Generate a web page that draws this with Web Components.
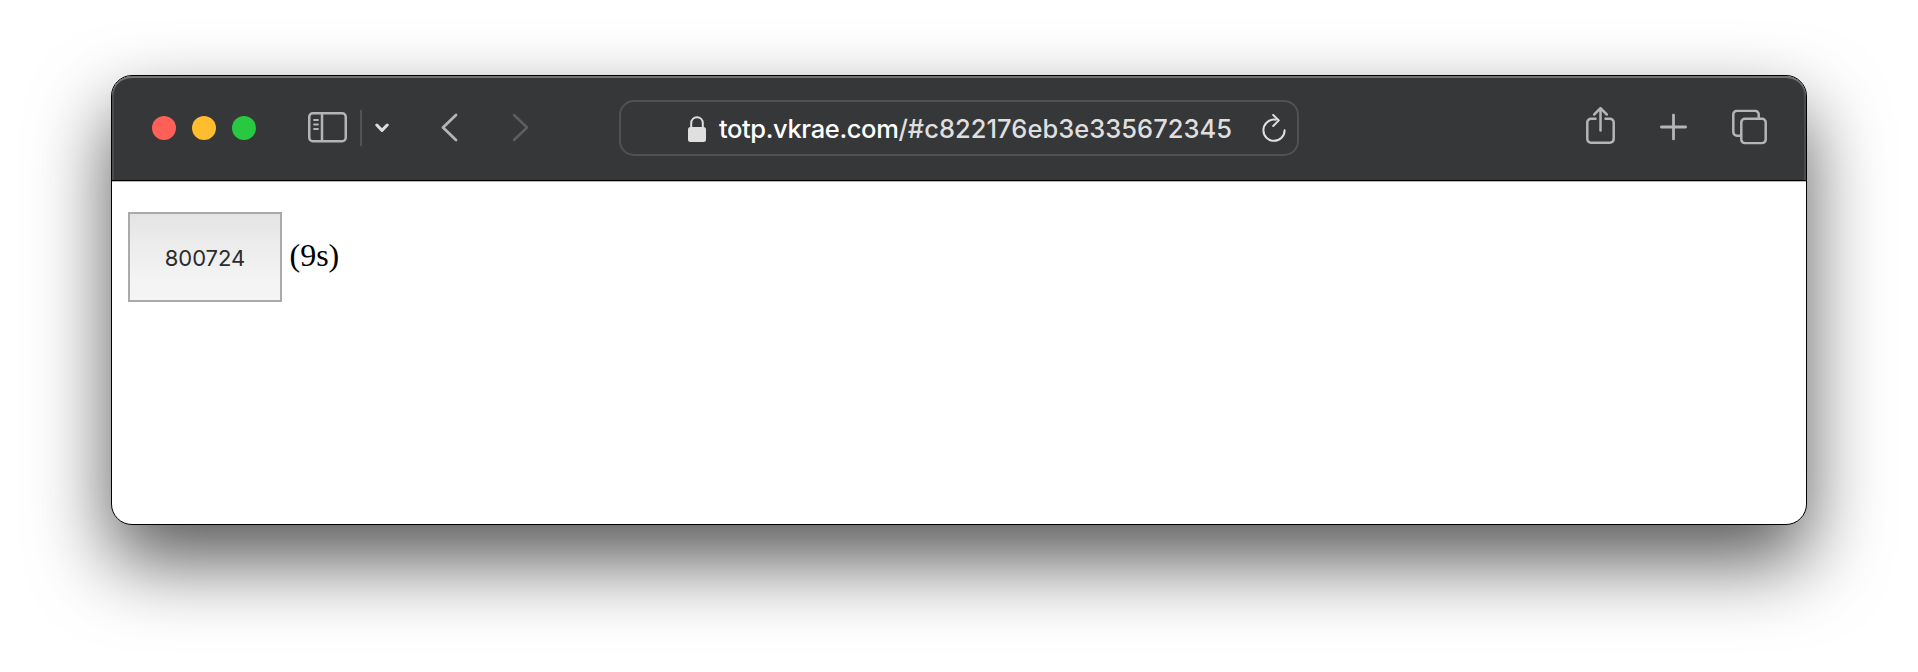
<!DOCTYPE html>
<html lang="en">
<head>
<meta charset="utf-8">
<title>totp.vkrae.com</title>
<style>
html,body{margin:0;background:#fff}
body{width:1918px;height:672px;overflow:hidden}
</style>
</head>
<body>
<browser-window>
  <browser-toolbar slot="toolbar">
    <traffic-lights slot="start"></traffic-lights>
    <tool-icon slot="start" name="sidebar" style="margin-left:52px"></tool-icon>
    <tool-icon slot="start" name="divider" style="margin-left:13px"></tool-icon>
    <tool-icon slot="start" name="down" style="margin-left:13px"></tool-icon>
    <tool-icon slot="start" name="back" style="margin-left:52px"></tool-icon>
    <tool-icon slot="start" name="forward" style="margin-left:54px"></tool-icon>
    <address-bar slot="address"><span slot="host">totp.vkrae.com</span><span slot="path">/#c822176eb3e335672345</span></address-bar>
    <tool-icon slot="end" name="share"></tool-icon>
    <tool-icon slot="end" name="plus"></tool-icon>
    <tool-icon slot="end" name="tabs"></tool-icon>
  </browser-toolbar>
  <totp-code><span slot="code">800724</span><span slot="time">(9s)</span></totp-code>
</browser-window>
<script>
const define = (name, html) => customElements.define(name, class extends HTMLElement {
  constructor() {
    super();
    this.attachShadow({ mode: 'open' }).innerHTML = html;
  }
});

define('browser-window', `<style>
:host{display:block;padding:75px 111px 147px;box-sizing:border-box;width:1918px;height:672px}
.frame{box-sizing:border-box;height:450px;border:1px solid #000;border-radius:21px;background:#fff;overflow:hidden;box-shadow:0 36px 78px rgba(0,0,0,.66)}
</style><div class="frame"><slot name="toolbar"></slot><slot></slot></div>`);

define('browser-toolbar', `<style>
:host{display:grid;grid-template-columns:507px 680px 507px;align-items:center;height:106px;padding-bottom:1px;box-sizing:border-box;background:#363739;border-bottom:1px solid #bbb;
box-shadow:inset 0 -1px #000,inset 0 2px #737475,inset 2px 0 #4b4c4e,inset -2px 0 #4b4c4e;border-radius:20px 20px 0 0}
.start{display:flex;align-items:center;padding-left:40px;height:104px}
.end{display:flex;align-items:center;justify-content:flex-end;gap:45px;padding-right:39px;height:104px}
</style><div class="start"><slot name="start"></slot></div><slot name="address"></slot><div class="end"><slot name="end"></slot></div>`);

define('traffic-lights', `<style>
:host{display:flex;gap:16px}
i{width:24px;height:24px;border-radius:50%;background:#fe5f57}
i:nth-of-type(2){background:#febc2e}i:nth-of-type(3){background:#28c840}
</style><i></i><i></i><i></i>`);

const ICONS = {
  sidebar: [39, 31, '<rect x="1.25" y="1.25" width="36.5" height="28" rx="3.5"/><path d="M14 1v29"/><path stroke-width="1.8" stroke-linecap="round" d="M6 8h4M6 12.5h4M6 17h4"/>'],
  divider: [2, 36, '<path stroke="#535456" stroke-width="2" d="M1 0v36"/>'],
  down: [14, 10, '<path stroke="#dededf" stroke-width="3" stroke-linecap="round" stroke-linejoin="round" d="M1.8 2 7 7.4 12.2 2"/>'],
  back: [17, 29, '<path stroke-linecap="round" stroke-linejoin="round" stroke-width="2.8" d="M15 2 2 14.5 15 27"/>'],
  forward: [17, 29, '<path stroke="#5d5e60" stroke-linecap="round" stroke-linejoin="round" d="M2 2 15 14.5 2 27"/>'],
  share: [29, 38, '<path stroke-linecap="round" d="M9.5 12.3H5a3.7 3.7 0 0 0-3.7 3.7v16.5A3.7 3.7 0 0 0 5 36.3h19a3.7 3.7 0 0 0 3.7-3.7V16a3.7 3.7 0 0 0-3.7-3.7h-4.5"/><path stroke-linecap="round" stroke-linejoin="round" d="M14.5 24V2M8.2 8 14.5 1.7 20.8 8"/>'],
  plus: [27, 27, '<path stroke-width="2.8" stroke-linecap="round" d="M13.5 1.4v24.2M1.4 13.5h24.2"/>'],
  tabs: [35, 35, '<path d="M9 26.3H5A3.7 3.7 0 0 1 1.3 22.6V5A3.7 3.7 0 0 1 5 1.3h18A3.7 3.7 0 0 1 26.7 5v4"/><rect x="9.3" y="9.3" width="24.4" height="24.4" rx="3.7"/>'],
  lock: [18, 26, '<rect x="0" y="11" width="18" height="15" rx="2.5" fill="#dfdfdf" stroke="none"/><path stroke="#dfdfdf" stroke-width="2" d="M3.2 12V7.3C3.2 3.6 5.8 1.3 9 1.3s5.8 2.3 5.8 6V12"/>'],
  reload: [24, 28, '<g stroke="#dfdfdf" stroke-width="2" stroke-linecap="round" stroke-linejoin="round"><path d="M13.8 5.8C13 5.6 12.5 5.6 12 5.6A10.6 10.6 0 1 0 22.6 16.2"/><path d="M11.2 1 16.8 6.4 11.2 12"/></g>']
};
/* vertical nudges relative to the toolbar's centre line */
const NUDGE = { sidebar: -1, down: 0, back: -1, forward: -1, share: -2.5, plus: -1.5, tabs: -1.5, lock: 1, reload: 0 };
customElements.define('tool-icon', class extends HTMLElement {
  constructor() { super(); this.attachShadow({ mode: 'open' }); }
  connectedCallback() {
    const name = this.getAttribute('name'), [w, h, art] = ICONS[name];
    this.shadowRoot.innerHTML = `<style>:host{display:block;flex:none;width:${w}px;height:${h}px}svg{display:block;transform:translateY(${NUDGE[name] || 0}px)}</style>
<svg width="${w}" height="${h}" viewBox="0 0 ${w} ${h}" fill="none" stroke="#b5b5b6" stroke-width="2.5">${art}</svg>`;
  }
});

define('address-bar', `<style>
:host{display:flex;align-items:center;box-sizing:border-box;height:56px;border:2px solid #505153;border-radius:15px;padding-left:67px;font:500 25.5px/50px Inter,sans-serif;color:#dfdfdf}
.url{display:block;flex:none;white-space:nowrap;margin-left:13px;width:543px;padding-top:2px}
slot[name=host]{color:#fff;letter-spacing:-.38px}
slot[name=path]{letter-spacing:.03px}
</style><tool-icon name="lock"></tool-icon><span class="url"><slot name="host"></slot><slot name="path"></slot></span><tool-icon name="reload"></tool-icon>`);

define('totp-code', `<style>
:host{display:flex;align-items:baseline;gap:7.5px;padding:30px 16px}
button{box-sizing:border-box;width:154px;height:90px;padding:2px 0 0;border:2px solid #aaa;border-radius:0;background:linear-gradient(#e4e4e4,#ebebeb 30%,#f3f3f3 75%,#f5f5f5);font:22px Inter,sans-serif;color:#2c2c2c}
.time{font:32px "Liberation Serif",serif;color:#000}
</style><button><slot name="code"></slot></button><span class="time"><slot name="time"></slot></span>`);
</script>
</body>
</html>
